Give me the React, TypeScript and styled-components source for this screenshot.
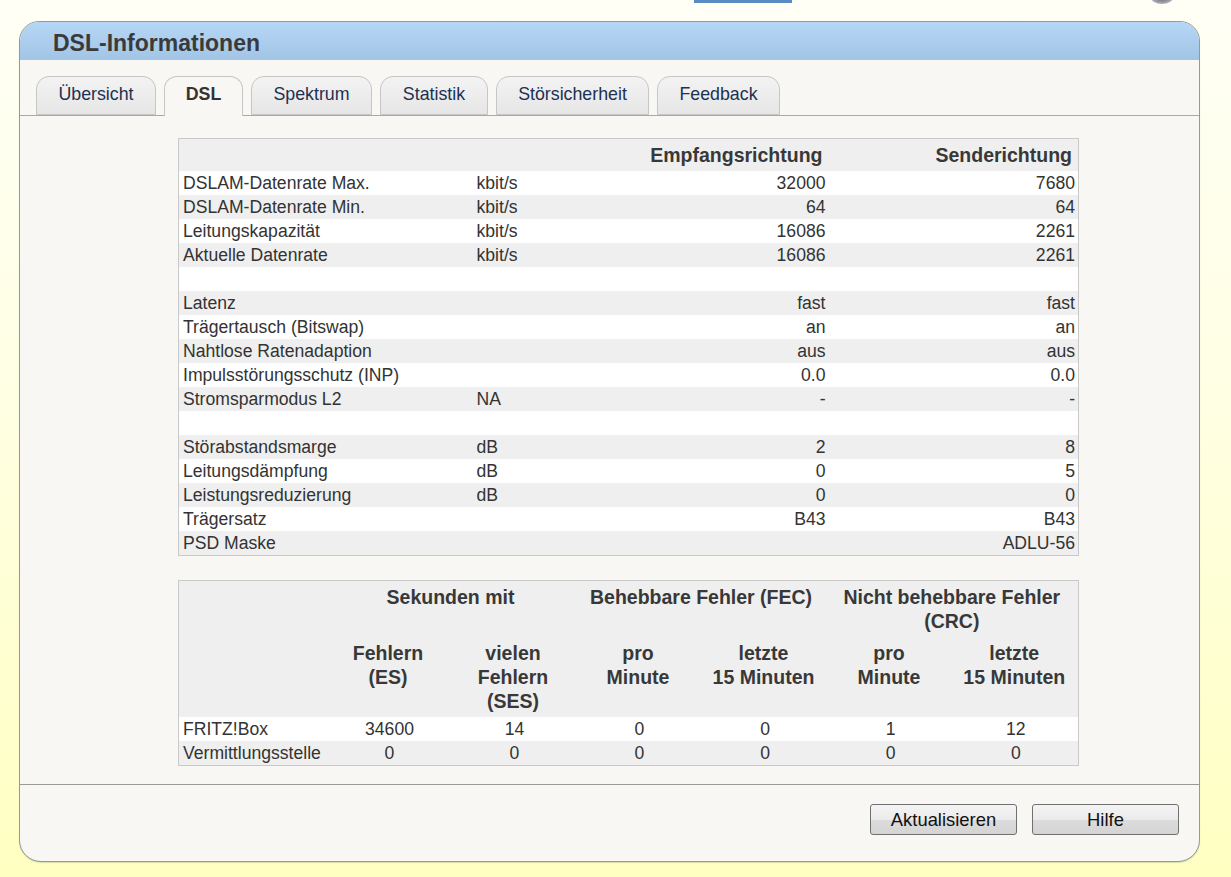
import React from "react";
import styled, { createGlobalStyle } from "styled-components";

const Global = createGlobalStyle`
  html, body { margin: 0; padding: 0; }
  body {
    min-height: 877px;
    background: linear-gradient(#fffff6 0%, #ffffe4 45%, #ffffc2 100%);
    font-family: "Liberation Sans", Arial, sans-serif;
    color: #333;
  }
`;

const Page = styled.div`
  width: 1231px;
  height: 877px;
  overflow: hidden;
  display: flex;
  flex-direction: column;
`;

const TopStrip = styled.div`
  height: 21px;
  display: flex;
  align-items: flex-start;
`;

const TopBar = styled.div`
  margin-left: 694px;
  width: 98px;
  height: 3px;
  background: #5a8bc3;
`;

const TopKnob = styled.div`
  margin-left: 358px;
  margin-top: -12px;
  width: 24px;
  height: 16px;
  border-radius: 50%;
  background: radial-gradient(#556 0%, #9a9aa4 55%, #e6e6ea 100%);
`;

const Panel = styled.div`
  margin-left: 19px;
  width: 1179px;
  height: 839px;
  border: 1px solid #8a9e9a;
  border-radius: 20px 20px 22px 22px;
  background: #f8f7f3;
  overflow: hidden;
  display: flex;
  flex-direction: column;
  box-shadow: 0 1px 1px rgba(0, 0, 0, 0.15);
`;

const Header = styled.div`
  height: 38px;
  flex-shrink: 0;
  background: linear-gradient(#b5d6f5, #a3c5e5);
  display: flex;
  align-items: center;
  padding: 4px 0 0 33px;
  box-sizing: border-box;
`;

const Title = styled.h1`
  margin: 0;
  font-size: 23px;
  font-weight: bold;
  color: #3a3a3a;
`;

const TabBar = styled.div`
  display: flex;
  flex-shrink: 0;
  gap: 8px;
  padding: 16px 0 0 16px;
  border-bottom: 1px solid #a9a9a9;
  height: 39px;
  align-items: flex-end;
`;

const Tab = styled.div<{ $active?: boolean; $w: number }>`
  width: ${(p) => p.$w}px;
  box-sizing: border-box;
  height: ${(p) => (p.$active ? 40 : 39)}px;
  margin-bottom: ${(p) => (p.$active ? -1 : 0)}px;
  border: 1px solid #c6c6c6;
  border-bottom: ${(p) => (p.$active ? "none" : "1px solid #c6c6c6")};
  border-radius: 13px 13px 0 0;
  background: ${(p) =>
    p.$active ? "#f8f7f3" : "linear-gradient(#f3f3f3, #e6e6e6)"};
  display: flex;
  align-items: flex-start;
  justify-content: center;
  padding-top: 7px;
  font-size: 17.8px;
  font-weight: ${(p) => (p.$active ? "bold" : "normal")};
  color: ${(p) => (p.$active ? "#333" : "#1d3152")};
`;

const Content = styled.div`
  flex: 1;
  padding: 22px 0 0 158px;
  display: flex;
  flex-direction: column;
  gap: 24px;
`;

const Table = styled.table`
  width: 900px;
  border-collapse: collapse;
  border: 1px solid #c9c9c9;
  font-size: 17.6px;
  color: #333;
  table-layout: fixed;
`;

const Row = styled.tr<{ $alt?: boolean }>`
  background: ${(p) => (p.$alt ? "#efefef" : "#ffffff")};
  height: 24px;
`;

const HeadRow = styled.tr`
  background: #efefef;
`;

const Th = styled.th<{ $align?: string }>`
  font-size: 19.5px;
  font-weight: bold;
  line-height: 24px;
  padding: 4px 6px 4px 4px;
  text-align: ${(p) => p.$align || "center"};
  vertical-align: top;
  color: #383838;
`;

const Td = styled.td<{ $align?: string }>`
  line-height: 24px;
  height: 24px;
  padding: 0 3px 0 4px;
  text-align: ${(p) => p.$align || "left"};
  white-space: nowrap;
`;

const Separator = styled.div`
  height: 0;
  border-top: 1px solid #9a9a9a;
`;

const Footer = styled.div`
  height: 76px;
  flex-shrink: 0;
  box-sizing: border-box;
  display: flex;
  justify-content: flex-end;
  align-items: flex-start;
  gap: 15px;
  padding: 19px 20px 0 0;
`;

const Button = styled.button`
  width: 147px;
  height: 31px;
  border: 1px solid #707070;
  border-radius: 3px;
  background: linear-gradient(#f4f4f4 0%, #ebebeb 50%, #dcdcdc 51%, #d4d4d4 100%);
  font-family: "Liberation Sans", Arial, sans-serif;
  font-size: 18.4px;
  color: #111;
  padding: 0;
`;

const tabs = [
  { t: "Übersicht", w: 120 },
  { t: "DSL", w: 79, a: true },
  { t: "Spektrum", w: 121 },
  { t: "Statistik", w: 108 },
  { t: "Störsicherheit", w: 153 },
  { t: "Feedback", w: 123 },
];

const rows: [string, string, string, string][] = [
  ["DSLAM-Datenrate Max.", "kbit/s", "32000", "7680"],
  ["DSLAM-Datenrate Min.", "kbit/s", "64", "64"],
  ["Leitungskapazität", "kbit/s", "16086", "2261"],
  ["Aktuelle Datenrate", "kbit/s", "16086", "2261"],
  ["", "", "", ""],
  ["Latenz", "", "fast", "fast"],
  ["Trägertausch (Bitswap)", "", "an", "an"],
  ["Nahtlose Ratenadaption", "", "aus", "aus"],
  ["Impulsstörungsschutz (INP)", "", "0.0", "0.0"],
  ["Stromsparmodus L2", "NA", "-", "-"],
  ["", "", "", ""],
  ["Störabstandsmarge", "dB", "2", "8"],
  ["Leitungsdämpfung", "dB", "0", "5"],
  ["Leistungsreduzierung", "dB", "0", "0"],
  ["Trägersatz", "", "B43", "B43"],
  ["PSD Maske", "", "", "ADLU-56"],
];

const errRows: [string, ...string[]][] = [
  ["FRITZ!Box", "34600", "14", "0", "0", "1", "12"],
  ["Vermittlungsstelle", "0", "0", "0", "0", "0", "0"],
];

export default function App() {
  return (
    <Page>
      <Global />
      <TopStrip>
        <TopBar />
        <TopKnob />
      </TopStrip>
      <Panel>
        <Header>
          <Title>DSL-Informationen</Title>
        </Header>
        <TabBar>
          {tabs.map((t) => (
            <Tab key={t.t} $active={t.a} $w={t.w}>
              {t.t}
            </Tab>
          ))}
        </TabBar>
        <Content>
          <Table>
            <colgroup>
              <col style={{ width: 294 }} />
              <col style={{ width: 110 }} />
              <col style={{ width: 246 }} />
              <col style={{ width: 250 }} />
            </colgroup>
            <thead>
              <HeadRow>
                <Th />
                <Th />
                <Th $align="right">Empfangsrichtung</Th>
                <Th $align="right">Senderichtung</Th>
              </HeadRow>
            </thead>
            <tbody>
              {rows.map((r, i) => (
                <Row key={i} $alt={i % 2 === 1}>
                  <Td>{r[0]}</Td>
                  <Td>{r[1]}</Td>
                  <Td $align="right">{r[2]}</Td>
                  <Td $align="right">{r[3]}</Td>
                </Row>
              ))}
            </tbody>
          </Table>

          <Table>
            <colgroup>
              <col style={{ width: 148 }} />
              <col style={{ width: 125 }} />
              <col style={{ width: 125 }} />
              <col style={{ width: 125 }} />
              <col style={{ width: 126 }} />
              <col style={{ width: 125 }} />
              <col style={{ width: 126 }} />
            </colgroup>
            <thead>
              <HeadRow>
                <Th />
                <Th colSpan={2}>Sekunden mit</Th>
                <Th colSpan={2}>Behebbare Fehler (FEC)</Th>
                <Th colSpan={2}>Nicht behebbare Fehler (CRC)</Th>
              </HeadRow>
              <HeadRow>
                <Th />
                <Th>
                  Fehlern
                  <br />
                  (ES)
                </Th>
                <Th>
                  vielen
                  <br />
                  Fehlern
                  <br />
                  (SES)
                </Th>
                <Th>
                  pro
                  <br />
                  Minute
                </Th>
                <Th>
                  letzte
                  <br />
                  15 Minuten
                </Th>
                <Th>
                  pro
                  <br />
                  Minute
                </Th>
                <Th>
                  letzte
                  <br />
                  15 Minuten
                </Th>
              </HeadRow>
            </thead>
            <tbody>
              {errRows.map((r, i) => (
                <Row key={i} $alt={i % 2 === 1}>
                  {r.map((c, j) => (
                    <Td key={j} $align={j === 0 ? "left" : "center"}>
                      {c}
                    </Td>
                  ))}
                </Row>
              ))}
            </tbody>
          </Table>
        </Content>
        <Separator />
        <Footer>
          <Button>Aktualisieren</Button>
          <Button>Hilfe</Button>
        </Footer>
      </Panel>
    </Page>
  );
}
